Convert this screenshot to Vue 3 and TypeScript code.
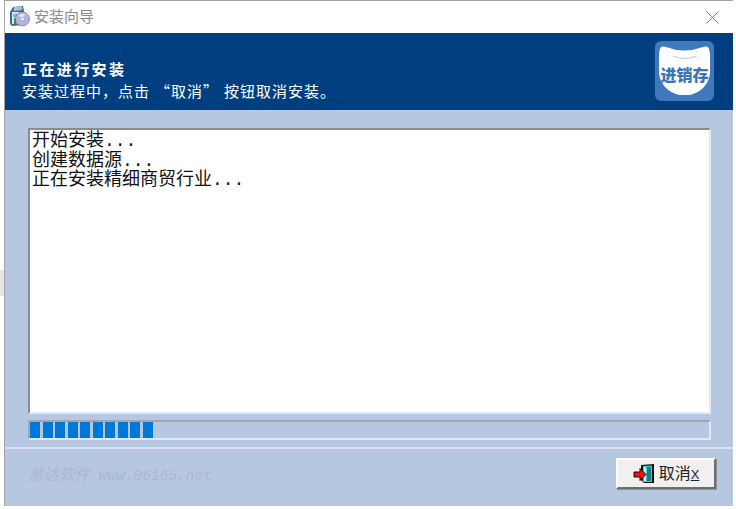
<script setup lang="ts">
const logLines: string[] = ['开始安装...', '创建数据源...', '正在安装精细商贸行业...']
const blocks: number[] = Array.from({ length: 10 }, (_, i) => i)
</script>

<template>
  <div class="page">
    <div class="edge-mark"></div>
    <div class="window">
      <div class="titlebar">
        <svg class="app-icon" width="21" height="22" viewBox="0 0 21 22">
          <path d="M1 7 L4 2 L14 1 L15 6 L14 20 L3 21 L1 19 Z" fill="#4c6a86" />
          <path d="M5 2 L13 1.5 L13 5 L5 6 Z" fill="#9fc4e6" />
          <rect x="3" y="7" width="10" height="12" fill="#d5e6f2" />
          <rect x="4" y="9" width="6" height="3" fill="#7fb4dc" />
          <rect x="5" y="13" width="2" height="6" fill="#1f9a3a" />
          <rect x="7" y="14" width="2" height="5" fill="#e8a020" />
          <circle cx="13.5" cy="14" r="7" fill="#b7b3e0" stroke="#6e7090" stroke-width="0.7" />
          <path d="M9 11 Q12 8 16 9 L14 13 Z" fill="#e6e4f6" />
          <circle cx="13.5" cy="14" r="1.8" fill="#fff" stroke="#8a8aa8" stroke-width="0.5" />
        </svg>
        <span class="title-text">安装向导</span>
        <svg class="close-icon" width="13" height="13" viewBox="0 0 13 13">
          <path d="M0.5 0.5 L12.5 12.5 M12.5 0.5 L0.5 12.5" stroke="#777" stroke-width="1" fill="none" />
        </svg>
      </div>

      <div class="header">
        <div class="header-text">
          <div class="header-title">正在进行安装</div>
          <div class="header-sub">安装过程中，点击<span class="q-open">“</span>取消<span class="q-close">”</span>按钮取消安装。</div>
        </div>
        <div class="logo">
          <svg class="logo-shape" width="51" height="49" viewBox="0 0 51 49">
            <path d="M2 1 Q4 0 7 1 Q25 8 44 1 Q47 0 49 1 Q51 4 51 10 L51 27 Q49 44 31 49 L20 49 Q2 44 0 27 L0 10 Q0 4 2 1 Z" fill="#fff" />
            <path d="M14 10 Q26 15 38 10" stroke="#c4c8cc" stroke-width="1" fill="none" />
          </svg>
          <span class="logo-text">进销存</span>
        </div>
      </div>

      <div class="body">
        <div class="log-box">
          <div v-for="line in logLines" :key="line" class="log-line">{{ line }}</div>
        </div>
        <div class="progress">
          <span v-for="b in blocks" :key="b" class="block"></span>
        </div>
      </div>

      <div class="footer">
        <span class="watermark"><span class="wm-cn">易达软件</span> www.96165.net</span>
        <button class="cancel-btn">
          <svg width="22" height="20" viewBox="0 0 22 20">
            <path d="M8 1 L21 0 L21 19 L11 19 L8 16 Z" fill="#111" />
            <path d="M10 2 L19 1.5 L19 18 L10 18 Z" fill="#35d0cc" />
            <path d="M14 3 L18 2.5 L18 17 L14 17 Z" fill="#0d8288" />
            <rect x="11" y="3" width="2" height="14" fill="#c8f4f0" />
            <path d="M1 8 L7 8 L7 4.5 L13 10.5 L7 16.5 L7 13 L1 13 Z" fill="#ee1111" stroke="#111" stroke-width="1" />
          </svg>
          <span class="btn-label">取消<u>X</u></span>
        </button>
      </div>
    </div>
  </div>
</template>

<style scoped>
.page {
  width: 736px;
  height: 509px;
  box-sizing: border-box;
  padding: 0 3px 3px 4px;
  background: #fff;
  position: relative;
  font-family: "Noto Sans CJK SC", sans-serif;
}

.edge-mark {
  position: absolute;
  left: 0;
  top: 270px;
  width: 4px;
  height: 26px;
  background: #e6e6e6;
}

.window {
  height: 100%;
  box-sizing: border-box;
  border-top: 1px solid #a3a3a3;
  border-left: 1px solid #a3a3a3;
  display: flex;
  flex-direction: column;
  background: #b6c7e1;
}

.titlebar {
  height: 32px;
  flex-shrink: 0;
  box-sizing: border-box;
  background: #fff;
  display: flex;
  align-items: center;
  padding: 0 14px 0 4px;
}

.app-icon {
  margin: 0 4px 3px 0;
}

.title-text {
  font-size: 15px;
  line-height: 20px;
  color: #8a8a8a;
  flex: 1;
  margin-bottom: 2px;
}

.close-icon {
  margin-top: 1px;
}

.header {
  height: 77px;
  flex-shrink: 0;
  box-sizing: border-box;
  background: #003f7f;
  display: flex;
  align-items: center;
  justify-content: space-between;
  padding: 0 19px 0 17px;
  color: #fff;
}

.header-text {
  padding-top: 15px;
}

.header-title {
  font-size: 15px;
  font-weight: 700;
  letter-spacing: 2.4px;
  line-height: 22px;
}

.header-sub {
  font-size: 15px;
  letter-spacing: 1px;
  line-height: 21px;
}

.q-open {
  margin-left: 5px;
}

.q-close {
  margin-right: 5px;
}

.logo {
  width: 59px;
  height: 60px;
  margin-top: -1px;
  border-radius: 6px;
  background: #3f78bd;
  position: relative;
  display: flex;
  justify-content: center;
}

.logo-shape {
  margin-top: 5px;
}

.logo-text {
  position: absolute;
  left: 0;
  right: 0;
  top: 22px;
  text-align: center;
  font-size: 16px;
  line-height: 22px;
  font-weight: 900;
  color: #3a74b8;
}

.body {
  flex: 1;
  padding: 18px 22px 7px 23px;
  display: flex;
  flex-direction: column;
  gap: 6px;
  border-bottom: 2px solid #dbe3f1;
}

.log-box {
  flex: 1;
  background: #fff;
  border: 2px solid;
  border-color: #8c8c8c #e4eaf4 #e4eaf4 #8c8c8c;
  padding: 2px 2px;
}

.log-line {
  font-family: "Liberation Mono", "Noto Sans CJK SC", monospace;
  font-size: 18px;
  line-height: 19.5px;
  color: #111;
  white-space: pre;
}

.progress {
  height: 20px;
  flex-shrink: 0;
  box-sizing: border-box;
  border: 2px solid;
  border-color: #a2a6ae #e2e8f3 #e2e8f3 #a2a6ae;
  display: flex;
  align-items: center;
  gap: 2.5px;
}

.block {
  width: 10px;
  height: 16px;
  background: #0078d7;
}

.footer {
  height: 57px;
  flex-shrink: 0;
  box-sizing: border-box;
  display: flex;
  align-items: center;
  justify-content: space-between;
  padding: 0 17px 8px 23px;
}

.watermark {
  font-size: 14.5px;
  font-style: italic;
  font-family: "Liberation Mono", "Noto Sans CJK SC", monospace;
  color: #aab8cf;
}

.wm-cn {
  font-size: 15.5px;
}

.cancel-btn {
  width: 100px;
  height: 31px;
  box-sizing: border-box;
  background: #f0f0f0;
  border: 2px solid;
  border-color: #fbfbfb #6e6e6e #6e6e6e #fbfbfb;
  box-shadow: 1px 1px 0 #8f8f8f;
  display: flex;
  align-items: center;
  justify-content: center;
  gap: 4px;
  padding: 0;
  font-family: "Noto Sans CJK SC", sans-serif;
}

.btn-label {
  font-size: 16px;
  color: #222;
  line-height: 20px;
}

.btn-label u {
  font-family: "Liberation Sans", sans-serif;
  font-size: 13px;
}
</style>

<style>
html,
body {
  margin: 0;
  background: #fff;
}
</style>
